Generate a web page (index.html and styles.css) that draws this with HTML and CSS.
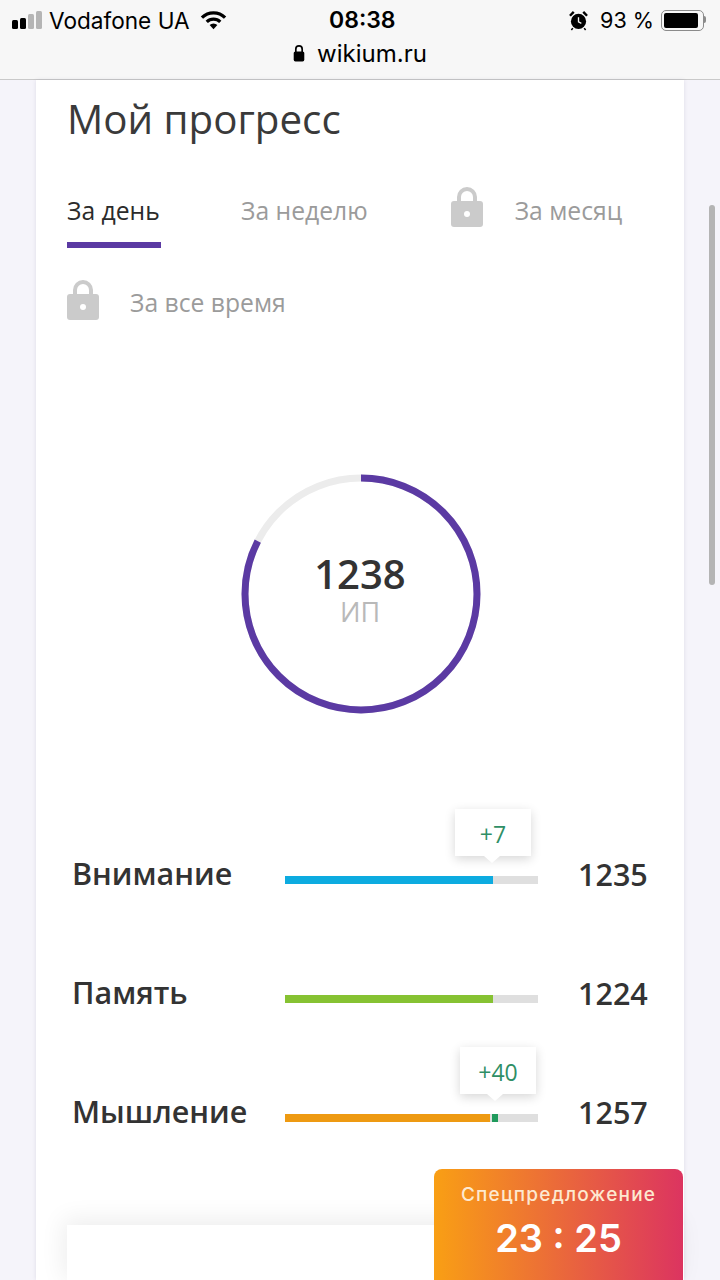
FILE: index.html
```html
<!DOCTYPE html>
<html lang="ru">
<head>
    <meta charset="UTF-8">
    <meta name="viewport" content="width=device-width, initial-scale=1.0">
    <title>Мой прогресс</title>
    <link rel="stylesheet" href="styles.css">
</head>
<body>
    <header class="topbar">
        <div class="status">
            <div class="status-left">
                <span class="signal"><i></i><i></i><i class="off"></i><i class="off"></i></span>
                <span>Vodafone UA</span>
                <svg class="wifi" width="27" height="20" viewBox="0 0 28 20">
                    <path d="M2 7.5a17 17 0 0 1 24 0" fill="none" stroke="#000" stroke-width="3.4"/>
                    <path d="M7 12a10 10 0 0 1 14 0" fill="none" stroke="#000" stroke-width="3.4"/>
                    <path d="M14 19.5l-4-4.2a5.6 5.6 0 0 1 8 0z" fill="#000"/>
                </svg>
            </div>
            <div class="status-time">08:38</div>
            <div class="status-right">
                <svg width="19" height="21" viewBox="0 0 20 22">
                    <circle cx="10" cy="12" r="8" fill="#000"/>
                    <path d="M10 7.5v5l3 1.5" fill="none" stroke="#f7f7f7" stroke-width="1.4"/>
                    <path d="M1 6l4-4M19 6l-4-4" stroke="#000" stroke-width="2.6"/>
                    <path d="M4 19l-1.5 2M16 19l1.5 2" stroke="#000" stroke-width="1.6"/>
                </svg>
                <span class="percent">93 %</span>
                <span class="battery"><span class="battery-level"></span></span>
            </div>
        </div>
        <div class="address">
            <svg width="12" height="18" viewBox="0 0 11 17">
                <path d="M2.5 8V4.8a3 3 0 0 1 6 0V8" fill="none" stroke="#000" stroke-width="1.6"/>
                <rect x="0.5" y="7" width="10" height="9.5" rx="1.6" fill="#000"/>
            </svg>
            <span>wikium.ru</span>
        </div>
    </header>

    <main class="card">
        <h1 class="title">Мой прогресс</h1>

        <div class="tabs">
            <a class="tab tab-active">За день</a>
            <a class="tab tab-week">За неделю</a>
            <a class="tab tab-month">
                <svg class="lock" width="32" height="40" viewBox="0 0 32 40">
                    <path d="M8 17V10a8 8 0 0 1 16 0v7" fill="none" stroke="#cbcbcb" stroke-width="4"/>
                    <rect y="14" width="32" height="26" rx="3" fill="#cbcbcb"/>
                    <circle cx="16" cy="27" r="3" fill="#fff"/>
                </svg>
                За месяц
            </a>
        </div>
        <div class="tabs tabs-second">
            <a class="tab">
                <svg class="lock" width="32" height="40" viewBox="0 0 32 40">
                    <path d="M8 17V10a8 8 0 0 1 16 0v7" fill="none" stroke="#cbcbcb" stroke-width="4"/>
                    <rect y="14" width="32" height="26" rx="3" fill="#cbcbcb"/>
                    <circle cx="16" cy="27" r="3" fill="#fff"/>
                </svg>
                За все время
            </a>
        </div>

        <div class="ring">
            <svg width="240" height="240" viewBox="0 0 240 240">
                <circle cx="120" cy="120" r="116" fill="none" stroke="#ececec" stroke-width="7"/>
                <circle class="ring-value" cx="120" cy="120" r="116" fill="none" stroke="#5b3aa3" stroke-width="7"
                        stroke-dasharray="601 728.8" transform="rotate(-90 120 120)"/>
            </svg>
            <div class="ring-text">
                <div class="ring-num">1238</div>
                <div class="ring-unit">ИП</div>
            </div>
        </div>

        <div class="stats">
            <div class="stat">
                <div class="stat-name">Внимание</div>
                <div class="bar">
                    <div class="bar-fill bar-blue"></div>
                    <div class="tip tip-first">+7</div>
                </div>
                <div class="stat-num">1235</div>
            </div>
            <div class="stat">
                <div class="stat-name">Память</div>
                <div class="bar">
                    <div class="bar-fill bar-green"></div>
                </div>
                <div class="stat-num">1224</div>
            </div>
            <div class="stat">
                <div class="stat-name">Мышление</div>
                <div class="bar">
                    <div class="bar-fill bar-orange"></div>
                    <div class="bar-plus"></div>
                    <div class="tip tip-second">+40</div>
                </div>
                <div class="stat-num">1257</div>
            </div>
        </div>

        <div class="next-card"></div>
    </main>

    <div class="offer">
        <div class="offer-title">Спецпредложение</div>
        <div class="offer-time">23 : 25</div>
    </div>
    <div class="scrollbar"></div>
</body>
</html>
```

FILE: styles.css
```css
html, body {
    margin: 0;
    padding: 0;
    height: 1280px;
    overflow: hidden;
}
body {
    position: relative;
    width: 720px;
    background: #f5f4fa;
    font-family: "Open Sans", Arial, sans-serif;
    color: #333;
}

/* browser bar */
.topbar {
    box-sizing: border-box;
    height: 80px;
    padding: 3px 12px 0 12px;
    background: #f7f7f7;
    border-bottom: 1px solid #c9c9c9;
    font-family: Inter, "Liberation Sans", sans-serif;
    color: #000;
}
.status {
    position: relative;
    display: flex;
    justify-content: space-between;
    align-items: center;
    height: 34px;
    font-size: 22.6px;
}
.status-left, .status-right {
    display: flex;
    align-items: center;
}
.status-left span {
    margin-right: 10px;
}
.status-left .signal {
    display: flex;
    align-items: flex-end;
    gap: 2px;
    height: 18px;
    margin-right: 7px;
}
.signal i {
    width: 6px;
    background: #000;
    border-radius: 1.5px;
}
.signal i:nth-child(1) { height: 9px; }
.signal i:nth-child(2) { height: 11px; }
.signal i:nth-child(3) { height: 15px; }
.signal i:nth-child(4) { height: 18px; }
.signal .off {
    background: #b5b5b5;
}
.status-time {
    position: absolute;
    left: 317px;
    font-size: 23px;
    font-weight: 600;
}
.percent {
    margin: 0 7px 0 12px;
    font-size: 21.6px;
}
.battery {
    position: relative;
    box-sizing: border-box;
    display: flex;
    width: 43px;
    height: 21px;
    margin-right: 4px;
    padding: 2px;
    border: 1.5px solid #8b8b8b;
    border-radius: 5px;
}
.battery::after {
    content: "";
    position: absolute;
    left: 42px;
    top: 5px;
    width: 2px;
    height: 7px;
    background: #8b8b8b;
    border-radius: 0 2px 2px 0;
}
.battery-level {
    width: 92%;
    background: #000;
    border-radius: 2px;
}
.address {
    display: flex;
    justify-content: center;
    align-items: center;
    gap: 12px;
    height: 30px;
    margin-top: 1px;
    font-size: 24px;
}

/* main card */
.card {
    box-sizing: border-box;
    height: 1200px;
    margin: 0 36px;
    padding: 12px 0 0 31px;
    background: #fff;
    box-shadow: 0 0 4px rgba(60, 50, 90, 0.12);
}
.title {
    margin: 0;
    font-size: 40.3px;
    line-height: 54px;
    font-weight: 400;
    color: #3a3a3a;
}

.tabs {
    display: flex;
    margin-top: 38px;
    height: 64px;
    line-height: 54px;
}
.tabs-second {
    margin-top: 32px;
    line-height: 46px;
}
.tab {
    box-sizing: border-box;
    display: flex;
    align-items: flex-start;
    font-size: 24.7px;
    color: #9b9b9b;
}
.tab-active {
    width: 94px;
    height: 64px;
    color: #2b2b2b;
    border-bottom: 6px solid #5b3aa3;
}
.tab-week {
    margin-left: 80px;
}
.tab-month {
    margin-left: 83px;
}
.lock {
    margin-right: 31px;
}
.tab-month .lock {
    margin-top: 3px;
    margin-right: 32px;
}

/* ring */
.ring {
    position: relative;
    width: 240px;
    height: 240px;
    margin: 130px 0 0 174px;
}
.ring svg {
    display: block;
}
.ring-text {
    position: absolute;
    top: 77px;
    left: -1px;
    width: 240px;
    text-align: center;
}
.ring-num {
    font-size: 40px;
    line-height: 46px;
    font-weight: 600;
    color: #333;
}
.ring-unit {
    font-size: 27px;
    line-height: 30px;
    color: #b9b9b9;
}

/* rows */
.stats {
    margin-top: 100px;
    padding-left: 5px;
}
.stat {
    display: flex;
    align-items: center;
    height: 119px;
}
.stat-name {
    width: 213px;
    margin-top: -2px;
    font-size: 30.5px;
    font-weight: 600;
    color: #333;
}
.stat-num {
    margin-left: 40px;
    font-size: 30.5px;
    font-weight: 600;
    color: #333;
}
.bar {
    position: relative;
    display: flex;
    width: 253px;
    height: 8px;
    margin-top: 12px;
    background: #dfdfdf;
}
.bar-fill {
    width: 208px;
}
.bar-blue { background: #0dabe0; }
.bar-green { background: #86c232; }
.bar-orange {
    width: 205px;
    background: #ee9a12;
}
.bar-plus {
    width: 6px;
    margin-left: 2px;
    background: #1f9a5c;
}
.tip {
    position: absolute;
    box-sizing: border-box;
    width: 76px;
    height: 47px;
    background: #fff;
    box-shadow: 0 3px 10px rgba(0, 0, 0, 0.16);
    font-size: 23px;
    line-height: 50px;
    text-align: center;
    color: #2f8f66;
}
.tip::after {
    content: "";
    position: absolute;
    top: 47px;
    border-left: 8px solid transparent;
    border-right: 8px solid transparent;
    border-top: 7px solid #fff;
}
.tip-first {
    left: 170px;
    top: -67px;
}
.tip-first::after {
    left: 29px;
}
.tip-second {
    left: 175px;
    top: -67px;
}
.tip-second::after {
    left: 27px;
}

.next-card {
    height: 60px;
    margin-top: 54px;
    background: #fff;
    box-shadow: -4px -6px 24px rgba(0, 0, 0, 0.07);
}

/* floating offer */
.offer {
    position: absolute;
    left: 434px;
    top: 1169px;
    width: 249px;
    height: 111px;
    border-radius: 8px 8px 0 0;
    background: linear-gradient(90deg, #f99f14, #dc3460);
    color: #fff;
    text-align: center;
    font-family: Inter, "Open Sans", sans-serif;
}
.offer-title {
    margin-top: 14px;
    font-size: 19px;
    line-height: 24px;
    font-weight: 500;
    letter-spacing: 1.2px;
    color: #fde9d0;
}
.offer-time {
    margin-top: 7px;
    font-size: 38px;
    line-height: 48px;
    font-weight: 600;
}
.scrollbar {
    position: absolute;
    left: 709px;
    top: 205px;
    width: 6px;
    height: 380px;
    border-radius: 3px;
    background: #b4b4b4;
}
```
